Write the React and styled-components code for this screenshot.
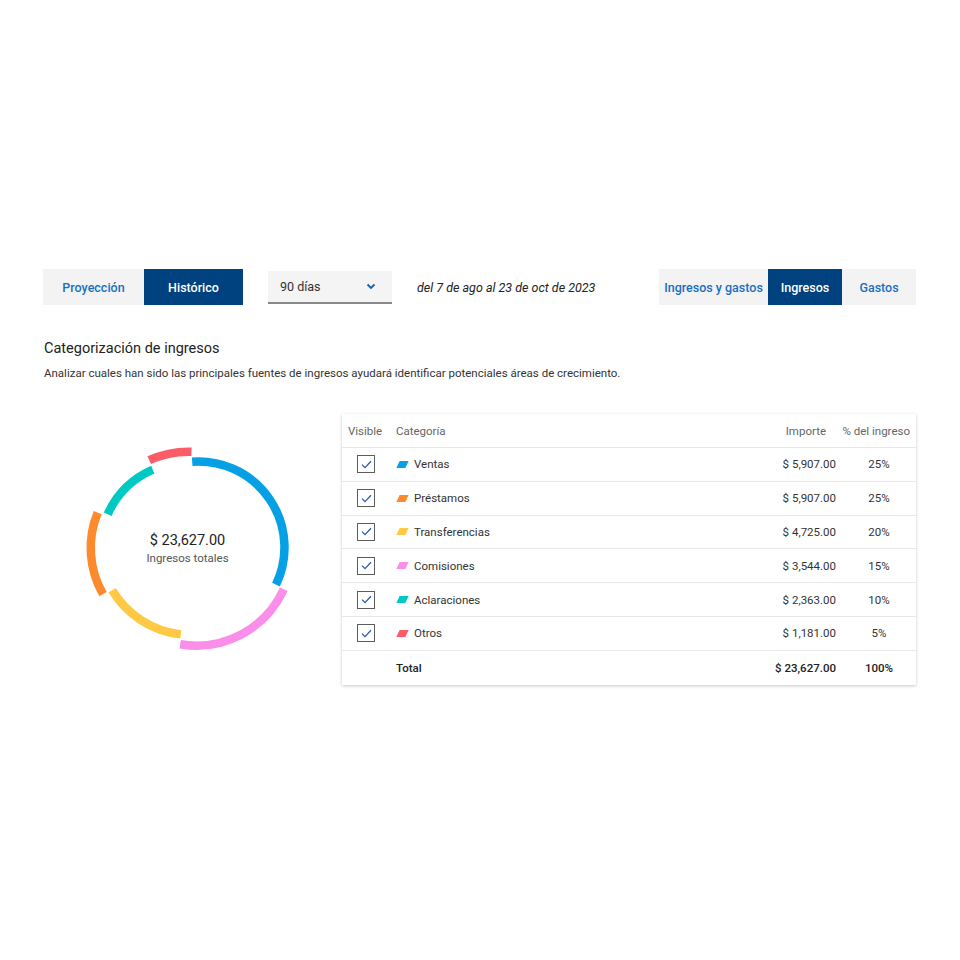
import React from "react";
import styled, { createGlobalStyle } from "styled-components";

const Global = createGlobalStyle`
  html, body { margin: 0; padding: 0; background: #fff; }
  body { font-family: Roboto, "Noto Sans", "Liberation Sans", sans-serif; color: #222; }
`;

const Page = styled.div`
  width: 960px;
  box-sizing: border-box;
  padding: 269px 44px 0 43px;
`;

const Toolbar = styled.div`
  display: flex;
  align-items: center;
  height: 36px;
`;

const Tabs = styled.div`
  display: flex;
  height: 36px;
  background: #f3f3f3;
`;

const Tab = styled.div`
  width: ${(p) => p.$w}px;
  display: flex;
  align-items: center;
  justify-content: center;
  font-size: 12.5px;
  font-weight: 500;
  color: ${(p) => (p.$active ? "#fff" : "#1a6fc2")};
  background: ${(p) => (p.$active ? "#00427f" : "transparent")};
`;

const Select = styled.div`
  margin-left: 25px;
  width: 124px;
  height: 33px;
  box-sizing: border-box;
  background: #f4f4f4;
  border-bottom: 2.5px solid #888;
  display: flex;
  align-items: center;
  justify-content: space-between;
  padding: 1px 16px 0 12px;
  font-size: 12.5px;
  color: #333;
`;

const DateText = styled.div`
  margin-left: 25px;
  font-size: 12.5px;
  font-style: italic;
  color: #222;
`;

const Spacer = styled.div`
  flex: 1;
`;

const Title = styled.h2`
  margin: 35px 0 0 1px;
  font-size: 14.5px;
  font-weight: 400;
  color: #222;
  line-height: 18px;
`;

const Desc = styled.p`
  margin: 7px 0 0 1px;
  font-size: 11.5px;
  color: #333;
  line-height: 16px;
`;

const Content = styled.div`
  display: flex;
  margin-top: 33px;
`;

const ChartCol = styled.div`
  width: 299px;
  padding-top: 14px;
`;

const ChartWrap = styled.div`
  position: relative;
  width: 240px;
  height: 240px;
  margin-left: 24.5px;
`;

const ChartLabel = styled.div`
  position: absolute;
  inset: 0;
  display: flex;
  flex-direction: column;
  align-items: center;
  justify-content: center;
  padding-top: 1px;
`;

const Total = styled.div`
  font-size: 14.5px;
  color: #222;
  line-height: 18px;
`;

const TotalSub = styled.div`
  font-size: 11.5px;
  color: #555;
  line-height: 16px;
`;

const Card = styled.div`
  width: 574px;
  background: #fff;
  box-shadow: 0 1px 3px rgba(0, 0, 0, 0.22);
  margin-bottom: 4px;
`;

const Row = styled.div`
  display: grid;
  grid-template-columns: 48px 1fr 140px 74px;
  align-items: center;
  height: ${(p) => (p.$head ? 34 : 33.8)}px;
  border-bottom: ${(p) => (p.$last ? "none" : "1.5px solid #e8e8e8")};
  box-sizing: border-box;
  font-size: 11.5px;
  color: ${(p) => (p.$head ? "#666" : "#333")};
  font-weight: ${(p) => (p.$bold ? 500 : 400)};
`;

const Cell = styled.div`
  display: flex;
  align-items: center;
  justify-content: ${(p) => p.$align || "flex-start"};
  padding-left: ${(p) => p.$pl || 0}px;
  padding-right: ${(p) => p.$pr || 0}px;
  color: ${(p) => p.$color || "inherit"};
`;

const Box = styled.div`
  width: 18px;
  height: 18px;
  box-sizing: border-box;
  border: 1.5px solid #5c5c5c;
  display: flex;
  align-items: center;
  justify-content: center;
  margin-left: 15px;
`;

const Swatch = styled.span`
  width: 9px;
  height: 7px;
  background: ${(p) => p.$c};
  transform: skewX(-25deg);
  margin: 0 7px 0 2px;
`;

const segments = [
  { c: "#06a0e4", d: "M191.7 461.7 A86 86 0 0 1 275.5 584.7" },
  { c: "#fb8ee9", d: "M283.3 589.3 A96 96 0 0 1 179.7 644.2" },
  { c: "#ffc945", d: "M180.3 634.4 A92 92 0 0 1 111.7 590.2" },
  { c: "#fd8a2c", d: "M102.5 594.2 A93 93 0 0 1 97.2 512.7" },
  { c: "#00c9c4", d: "M107.2 514.2 A88 88 0 0 1 152.3 469.7" },
  { c: "#fb5d68", d: "M148.7 460.2 A96 96 0 0 1 191 451.7" },
];

const rows = [
  { name: "Ventas", c: "#06a0e4", amt: "$ 5,907.00", pct: "25%" },
  { name: "Préstamos", c: "#fd8a2c", amt: "$ 5,907.00", pct: "25%" },
  { name: "Transferencias", c: "#ffc945", amt: "$ 4,725.00", pct: "20%" },
  { name: "Comisiones", c: "#fb8ee9", amt: "$ 3,544.00", pct: "15%" },
  { name: "Aclaraciones", c: "#00c9c4", amt: "$ 2,363.00", pct: "10%" },
  { name: "Otros", c: "#fb5d68", amt: "$ 1,181.00", pct: "5%" },
];

const Check = () => (
  <svg width="11" height="9" viewBox="0 0 11 9">
    <path d="M1 4.6 L4 7.6 L10 1.2" fill="none" stroke="#2a5ca8" strokeWidth="1.3" />
  </svg>
);

export default function App() {
  return (
    <Page>
      <Global />
      <Toolbar>
        <Tabs>
          <Tab $w={101}>Proyección</Tab>
          <Tab $w={99} $active>Histórico</Tab>
        </Tabs>
        <Select>
          <span>90 días</span>
          <svg width="10" height="7" viewBox="0 0 10 7">
            <path d="M1.5 1.5 L5 5 L8.5 1.5" fill="none" stroke="#1a5fae" strokeWidth="1.8" />
          </svg>
        </Select>
        <DateText>del 7 de ago al 23 de oct de 2023</DateText>
        <Spacer />
        <Tabs>
          <Tab $w={109}>Ingresos y gastos</Tab>
          <Tab $w={74} $active>Ingresos</Tab>
          <Tab $w={74}>Gastos</Tab>
        </Tabs>
      </Toolbar>
      <Title>Categorización de ingresos</Title>
      <Desc>
        Analizar cuales han sido las principales fuentes de ingresos ayudará identificar potenciales áreas de crecimiento.
      </Desc>
      <Content>
        <ChartCol>
          <ChartWrap>
            <svg width="240" height="240" viewBox="67.5 428 240 240">
              {segments.map((s, i) => (
                <path key={i} d={s.d} fill="none" stroke={s.c} strokeWidth="8.5" />
              ))}
            </svg>
            <ChartLabel>
              <Total>$ 23,627.00</Total>
              <TotalSub>Ingresos totales</TotalSub>
            </ChartLabel>
          </ChartWrap>
        </ChartCol>
        <Card>
          <Row $head>
            <Cell $pl={6}>Visible</Cell>
            <Cell $pl={6}>Categoría</Cell>
            <Cell $align="flex-end" $pr={16}>Importe</Cell>
            <Cell $align="flex-end" $pr={6}>% del ingreso</Cell>
          </Row>
          {rows.map((r) => (
            <Row key={r.name}>
              <Cell>
                <Box>
                  <Check />
                </Box>
              </Cell>
              <Cell $pl={6}>
                <Swatch $c={r.c} />
                {r.name}
              </Cell>
              <Cell $align="flex-end" $pr={6}>{r.amt}</Cell>
              <Cell $align="center">{r.pct}</Cell>
            </Row>
          ))}
          <Row $last $bold>
            <Cell />
            <Cell $pl={6} $color="#222">Total</Cell>
            <Cell $align="flex-end" $pr={6} $color="#222">$ 23,627.00</Cell>
            <Cell $align="center" $color="#222">100%</Cell>
          </Row>
        </Card>
      </Content>
    </Page>
  );
}
